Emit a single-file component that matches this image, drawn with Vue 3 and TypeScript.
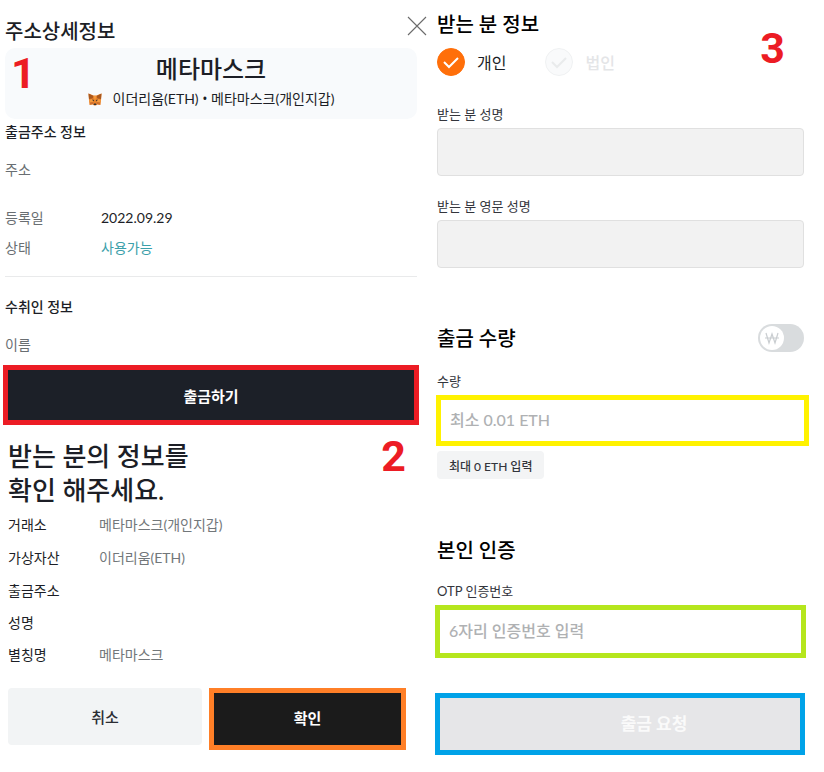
<script setup lang="ts">
import { ref } from 'vue'

interface Row {
  label: string
  value?: string
}

const confirmRows: Row[] = [
  { label: '거래소', value: '메타마스크(개인지갑)' },
  { label: '가상자산', value: '이더리움(ETH)' },
  { label: '출금주소' },
  { label: '성명' },
  { label: '별칭명', value: '메타마스크' },
]

const recipientType = ref('personal')
const wonMode = ref(false)
const amount = ref('')
const otp = ref('')
</script>

<template>
  <main class="page">
    <div class="column left">
      <section class="detail">
        <header class="detail-head">
          <h1 class="title">주소상세정보</h1>
          <button class="close" type="button" aria-label="닫기">
            <svg viewBox="0 0 20 20" width="20" height="20" aria-hidden="true">
              <path d="M1 1 19 19M19 1 1 19" fill="none" stroke="#6b6b6b" stroke-width="1.1" />
            </svg>
          </button>
        </header>

        <div class="wallet">
          <span class="step step-one">1</span>
          <h2 class="wallet-name">메타마스크</h2>
          <p class="wallet-sub">
            <svg class="fox" viewBox="0 0 28 26" width="14" height="13" aria-hidden="true">
              <path d="M1 1 11 5h6L27 1l-1 14-1 9-7-1-2 2h-4l-2-2-7 1-1-9z" fill="#e8822a" />
              <path d="M1 1 11 6l-2 5-7 1zM27 1 17 6l2 5 7 1z" fill="#a9581f" />
              <path d="m11 6 3 9 3-9zM2 14l7-2 2 6-7 1zM26 14l-7-2-2 6 7 1z" fill="#f59a3c" />
              <path d="m8 13 4 1-1 3zM20 13l-4 1 1 3zM12 21h4l1 3h-6z" fill="#33302f" />
              <path d="m4 19 6-1 1 4-7 1zM24 19l-6-1-1 4 7 1z" fill="#cf702e" />
            </svg>
            <span>이더리움(ETH) <span class="dot">•</span> 메타마스크(개인지갑)</span>
          </p>
        </div>

        <h3 class="subtitle">출금주소 정보</h3>
        <dl class="facts">
          <div class="fact fact-address"><dt>주소</dt><dd></dd></div>
          <div class="fact"><dt>등록일</dt><dd>2022.09.29</dd></div>
          <div class="fact"><dt>상태</dt><dd class="ok">사용가능</dd></div>
        </dl>
        <hr class="rule" />
        <h3 class="subtitle">수취인 정보</h3>
        <dl class="facts">
          <div class="fact"><dt>이름</dt><dd></dd></div>
        </dl>
        <button class="withdraw" type="button">출금하기</button>
      </section>

      <section class="confirm">
        <div class="confirm-head">
          <h2 class="question">받는 분의 정보를<br />확인 해주세요.</h2>
          <span class="step">2</span>
        </div>
        <dl class="summary">
          <div v-for="row in confirmRows" :key="row.label" class="entry" :class="{ blank: !row.value }">
            <dt>{{ row.label }}</dt>
            <dd>{{ row.value }}</dd>
          </div>
        </dl>
        <div class="actions">
          <button class="cancel" type="button">취소</button>
          <button class="accept" type="button">확인</button>
        </div>
      </section>
    </div>

    <form class="column right" @submit.prevent>
      <span class="step step-three">3</span>
      <h2 class="title">받는 분 정보</h2>
      <div class="types" role="radiogroup" aria-label="받는 분 정보">
        <label class="type">
          <input v-model="recipientType" type="radio" name="type" value="personal" />
          <svg class="mark" viewBox="0 0 28 28" width="28" height="28" aria-hidden="true">
            <circle cx="14" cy="14" r="13.5" />
            <path d="m7 14 5 5 9-9" />
          </svg>
          <span>개인</span>
        </label>
        <label class="type">
          <input v-model="recipientType" type="radio" name="type" value="company" disabled />
          <svg class="mark" viewBox="0 0 28 28" width="28" height="28" aria-hidden="true">
            <circle cx="14" cy="14" r="13.5" />
            <path d="m7 14 5 5 9-9" />
          </svg>
          <span>법인</span>
        </label>
      </div>

      <div class="field">
        <label for="name">받는 분 성명</label>
        <input id="name" class="box" type="text" disabled />
      </div>
      <div class="field">
        <label for="name-en">받는 분 영문 성명</label>
        <input id="name-en" class="box" type="text" disabled />
      </div>

      <div class="amount-head">
        <h2 class="title">출금 수량</h2>
        <label class="toggle">
          <input v-model="wonMode" type="checkbox" role="switch" aria-label="원화로 입력" />
          <span class="knob">
            <svg viewBox="0 0 16 14" width="16" height="14" aria-hidden="true">
              <path d="m2 2 3 10 3-9 3 9 3-10M1 7h14" fill="none" stroke="#c9cdd0" stroke-width="1.2" />
            </svg>
          </span>
        </label>
      </div>
      <div class="field">
        <label for="amount">수량</label>
        <input id="amount" v-model="amount" class="box amount" type="text" placeholder="최소 0.01 ETH" />
      </div>
      <button class="max" type="button">최대 0 ETH 입력</button>

      <h2 class="title verify">본인 인증</h2>
      <div class="field">
        <label for="otp">OTP 인증번호</label>
        <input id="otp" v-model="otp" class="box otp" type="text" placeholder="6자리 인증번호 입력" />
      </div>
      <button class="request" type="submit" disabled>출금 요청</button>
    </form>
  </main>
</template>

<style>
body {
  margin: 0;
  background: #fff;
}
</style>

<style scoped>
.page {
  display: grid;
  grid-template-columns: minmax(0, 432fr) minmax(0, 392fr);
  font-family: Lato, "Noto Sans CJK KR", sans-serif;
  font-size: 14px;
  color: #1c1e26;
}
.page * {
  box-sizing: border-box;
}
h1, h2, h3, p, dl, dd {
  margin: 0;
}
button, input {
  font-family: inherit;
}
.title {
  font-size: 20px;
  line-height: 30px;
  font-weight: 500;
}
.step {
  font: bold 43px/34px Roboto, sans-serif;
  color: #ec1c24;
}

/* address detail */
.detail {
  padding: 16px 15px 0 5px;
}
.detail-head {
  display: flex;
  justify-content: space-between;
  height: 32px;
  margin-right: -10px;
}
.close {
  width: 20px;
  height: 20px;
  padding: 0;
  border: 0;
  background: none;
}
.close svg {
  display: block;
}
.wallet {
  position: relative;
  padding: 4px 0 7px;
  border-radius: 10px;
  background: #f8fafc;
  text-align: center;
}
.step-one {
  position: absolute;
  left: 6px;
  top: 8px;
}
.wallet-name {
  font-size: 24px;
  line-height: 34px;
  font-weight: 500;
}
.wallet-sub {
  display: flex;
  align-items: center;
  justify-content: center;
  gap: 11px;
  line-height: 26px;
}
.dot {
  font-family: "Open Sans", sans-serif;
  line-height: 1;
}
.subtitle {
  font-size: 14px;
  line-height: 25px;
  font-weight: 500;
}
.facts {
  padding-top: 11px;
  line-height: 30px;
}
.fact {
  display: flex;
}
.fact-address {
  margin-bottom: 18px;
}
.fact dt {
  width: 96px;
  height: 30px;
  color: #696e72;
}
.ok {
  color: #3ba0aa;
}
.rule {
  margin: 13px 0 17px;
  border: 0;
  border-top: 1px solid #e9eaeb;
}
.withdraw {
  display: block;
  width: calc(100% + 4px);
  height: 60px;
  margin: 5px -2px 0;
  border: 5px solid #ec1c24;
  background: #1c2028;
  color: #fff;
  font-size: 15px;
  font-weight: 700;
}

/* recipient confirmation */
.confirm {
  padding: 14px 26px 0 8px;
}
.confirm-head {
  display: flex;
  justify-content: space-between;
}
.question {
  font-size: 26px;
  line-height: 34px;
  font-weight: 500;
}
.summary {
  padding-top: 2px;
  line-height: 32px;
}
.entry {
  display: flex;
  height: 33px;
}
.entry.blank {
  height: 32px;
}
.entry dt {
  width: 91px;
}
.entry dd {
  color: #72777a;
}
.actions {
  display: grid;
  grid-template-columns: 194fr 197fr;
  align-items: start;
  gap: 7px;
  margin-top: 16px;
}
.actions button {
  font-size: 15px;
}
.cancel {
  height: 57px;
  border: 0;
  border-radius: 4px;
  background: #f2f4f5;
  color: #2b2d33;
  font-weight: 500;
}
.accept {
  height: 62px;
  padding: 0 0 3px;
  border: 5px solid #ff7f27;
  background: #1b1b1b;
  color: #fff;
  font-weight: 700;
}

/* withdrawal form */
.right {
  position: relative;
  padding: 9px 20px 0 5px;
}
.right .title {
  color: #000;
}
.step-three {
  position: absolute;
  right: 39px;
  top: 31px;
}
.types {
  display: flex;
  gap: 39px;
  margin: 9px 0 24px;
}
.type {
  position: relative;
  display: flex;
  align-items: center;
  gap: 12px;
  height: 28px;
  font-size: 16px;
}
.type input {
  position: absolute;
  width: 28px;
  height: 28px;
  margin: 0;
  opacity: 0;
}
.mark circle {
  fill: #f9fafb;
  stroke: #eff1f2;
}
.mark path {
  fill: none;
  stroke: #e9ebec;
  stroke-width: 2;
}
input:checked + .mark circle {
  fill: #ff6f0a;
  stroke: #ff6f0a;
}
input:checked + .mark path {
  stroke: #fff;
}
input:disabled ~ span {
  color: #e4e5e7;
  font-weight: 500;
}
.field {
  display: flex;
  flex-direction: column;
}
.field label {
  font-size: 13px;
  line-height: 28px;
  color: #33353c;
}
.box {
  width: 100%;
  height: 48px;
  padding: 0 9px 2px;
  border: 1px solid #e0e0e0;
  border-radius: 4px;
  background: #f2f2f2;
  font-size: 16px;
  outline: 0;
}
.field + .field {
  margin-top: 16px;
}
.box::placeholder {
  color: #afb1b3;
  font-weight: 500;
  opacity: 1;
}
.amount-head {
  display: flex;
  justify-content: space-between;
  align-items: center;
  margin: 55px 0 14px;
}
.toggle {
  position: relative;
  width: 46px;
  height: 28px;
  padding: 2px;
  border-radius: 14px;
  background: #d9dcde;
}
.toggle input {
  position: absolute;
  inset: 0;
  width: 46px;
  height: 28px;
  margin: 0;
  opacity: 0;
}
.knob {
  display: grid;
  place-items: center;
  width: 24px;
  height: 24px;
  border-radius: 50%;
  background: #fff;
}
.toggle input:checked + .knob {
  margin-left: 18px;
}
.amount {
  width: calc(100% + 6px);
  height: 51px;
  margin-left: -1px;
  border: 5px solid #fff200;
  border-radius: 0;
  background: #fff;
}
.max {
  display: block;
  height: 28px;
  margin-top: 5px;
  padding: 0 12px;
  border: 0;
  border-radius: 4px;
  background: #f3f4f5;
  color: #33353c;
  font-size: 12px;
  font-weight: 500;
}
.verify {
  margin: 56px 0 12px;
}
.otp {
  width: calc(100% + 4px);
  height: 53px;
  margin-left: -2px;
  border: 5px solid #b5e61d;
  border-radius: 0;
  background: #fff;
}
.request {
  display: block;
  width: calc(100% + 3px);
  height: 62px;
  margin: 35px -2px 0;
  padding: 0 0 3px 68px;
  border: 5px solid #00a2e8;
  background: #e6e6e8;
  color: #fafafa;
  font-size: 17px;
  font-weight: 700;
}
</style>
